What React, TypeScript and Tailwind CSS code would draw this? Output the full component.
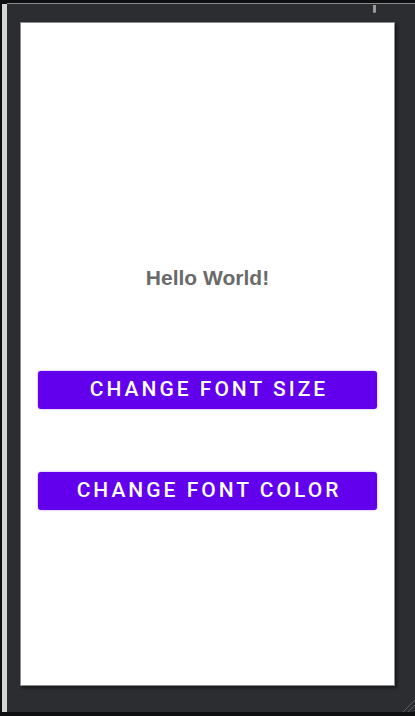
import { useState } from 'react';

export default function App() {
  const [big, setBig] = useState(false);
  const [colored, setColored] = useState(false);

  return (
    <div className="h-[716px] w-[415px] bg-[#0e0f11] pt-[3px] pb-[4px] pl-[2px] flex overflow-hidden">
      <div className="w-[5px] bg-[#d4d4d4] mt-[1px]" />
      <div className="relative flex-1 border-t border-[#8a8a8a] bg-[#2b2d30] pl-[13px] pr-[20px] pt-[18px] pb-[26px]">
        <div className="absolute left-[366px] top-[1px] h-[8px] w-[3px] rounded-b-sm bg-[#9a9a9a]" />
        <svg className="absolute right-0 bottom-0" width="14" height="14" viewBox="0 0 14 14">
          <line x1="2" y1="14" x2="14" y2="2" stroke="#55585c" strokeWidth="1" />
          <line x1="7" y1="14" x2="14" y2="7" stroke="#55585c" strokeWidth="1" />
        </svg>
        <div className="h-full border border-[#8c8c8c] bg-white flex flex-col px-[17px] pt-[243px] shadow-[2px_2px_3px_rgba(0,0,0,0.5)]">
          <p
            className={`text-center font-bold leading-[24px] ${colored ? 'text-[#e53935]' : 'text-[#6a6a6a]'}`}
            style={{ fontFamily: '"Liberation Sans", Arial, sans-serif', fontSize: big ? 27 : 21 }}
          >
            Hello World!
          </p>
          <button
            onClick={() => setBig(!big)}
            className="mt-[81px] h-[38px] rounded-[3px] bg-[#6200ee] text-white text-[21px] font-medium tracking-[3px] pl-[3px] shadow-[0_0_2px_rgba(98,0,238,0.5)]"
            style={{ fontFamily: 'Roboto, "Liberation Sans", sans-serif' }}
          >
            CHANGE FONT SIZE
          </button>
          <button
            onClick={() => setColored(!colored)}
            className="mt-[63px] h-[38px] rounded-[3px] bg-[#6200ee] text-white text-[21px] font-medium tracking-[3px] pl-[3px] shadow-[0_0_2px_rgba(98,0,238,0.5)]"
            style={{ fontFamily: 'Roboto, "Liberation Sans", sans-serif' }}
          >
            CHANGE FONT COLOR
          </button>
        </div>
      </div>
    </div>
  );
}
